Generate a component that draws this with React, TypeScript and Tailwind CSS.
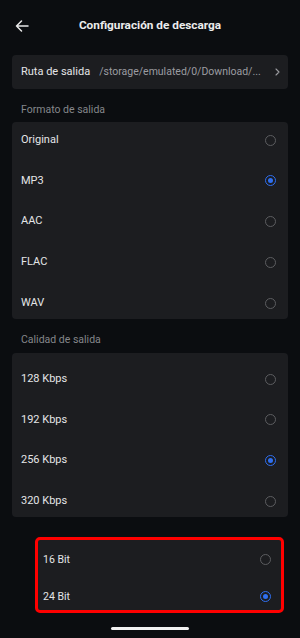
import { useState } from 'react';

const FORMATS = ['Original', 'MP3', 'AAC', 'FLAC', 'WAV'];
const QUALITIES = ['128 Kbps', '192 Kbps', '256 Kbps', '320 Kbps'];
const BITS = ['16 Bit', '24 Bit'];

function Radio({ checked }: { checked: boolean }) {
  if (checked) {
    return (
      <span className="flex h-[11px] w-[11px] items-center justify-center rounded-full border-[1.5px] border-[#2f6ff0]">
        <span className="h-[5px] w-[5px] rounded-full bg-[#2f6ff0]" />
      </span>
    );
  }
  return <span className="h-[11px] w-[11px] rounded-full border-[1.5px] border-[#5c5d60]" />;
}

function Row({ label, checked, onClick }: { label: string; checked: boolean; onClick: () => void }) {
  return (
    <button
      type="button"
      onClick={onClick}
      className="flex h-[34px] w-full shrink-0 items-center justify-between pl-[9px] pr-[12px] text-left"
    >
      <span className="text-[11px] text-[#e4e5e7]">{label}</span>
      <Radio checked={checked} />
    </button>
  );
}

export default function App() {
  const [format, setFormat] = useState('MP3');
  const [quality, setQuality] = useState('256 Kbps');
  const [bits, setBits] = useState('24 Bit');

  return (
    <div className="flex h-[638px] w-[300px] flex-col overflow-hidden bg-[#0b0d10] font-['Roboto',sans-serif]">
      <header className="relative flex h-[52px] shrink-0 items-center justify-center">
        <svg className="absolute left-[15px] top-[20px] h-[12px] w-[14px]" viewBox="0 0 14 12" fill="none" stroke="#e8e8e8" strokeWidth={1.5} strokeLinecap="round" strokeLinejoin="round">
          <path d="M13 6H1.5M6.5 1L1.5 6l5 5" />
        </svg>
        <h1 className="text-[11.8px] font-bold text-[#ececec]">Configuración de descarga</h1>
      </header>

      <div className="mx-[12px] mt-[3px] flex h-[34px] shrink-0 items-center rounded-[4px] bg-[#1c1d20] pl-[9px] pr-[8px]">
        <span className="text-[11px] text-[#e4e5e7]">Ruta de salida</span>
        <span className="ml-[9px] flex-1 truncate text-[10.5px] text-[#9b9ca0]">/storage/emulated/0/Download/...</span>
        <svg className="ml-[8px] h-[8px] w-[5px]" viewBox="0 0 5 8" fill="none" stroke="#9b9ca0" strokeWidth={1.1} strokeLinecap="round" strokeLinejoin="round">
          <path d="M1 1l3 3-3 3" />
        </svg>
      </div>

      <p className="mt-[14px] pl-[21px] text-[10.5px] leading-[14px] text-[#85878b]">Formato de salida</p>
      <div className="mx-[12px] mt-[5px] flex h-[197px] shrink-0 flex-col gap-[6.75px] rounded-[4px] bg-[#1c1d20] pt-[1px]">
        {FORMATS.map(f => (
          <Row key={f} label={f} checked={format === f} onClick={() => setFormat(f)} />
        ))}
      </div>

      <p className="mt-[14px] pl-[21px] text-[10.5px] leading-[14px] text-[#85878b]">Calidad de salida</p>
      <div className="mx-[12px] mt-[6px] flex h-[164px] shrink-0 flex-col gap-[6.75px] rounded-[4px] bg-[#1c1d20] pt-[9px]">
        {QUALITIES.map(q => (
          <Row key={q} label={q} checked={quality === q} onClick={() => setQuality(q)} />
        ))}
      </div>

      <div className="ml-[35px] mr-[16px] mt-[20px] flex h-[76px] shrink-0 flex-col gap-[4px] rounded-[5px] border-[3px] border-[#ff0000] bg-[#1c1d20] pt-[3px]">
        {BITS.map(b => (
          <button
            key={b}
            type="button"
            onClick={() => setBits(b)}
            className="flex h-[33px] w-full shrink-0 items-center justify-between pl-[5px] pr-[10px] text-left"
          >
            <span className="text-[10.5px] text-[#e4e5e7]">{b}</span>
            <Radio checked={bits === b} />
          </button>
        ))}
      </div>

      <div className="mt-auto mb-[8px] flex justify-center">
        <span className="h-[3px] w-[78px] rounded-full bg-[#f2f2f2]" />
      </div>
    </div>
  );
}
